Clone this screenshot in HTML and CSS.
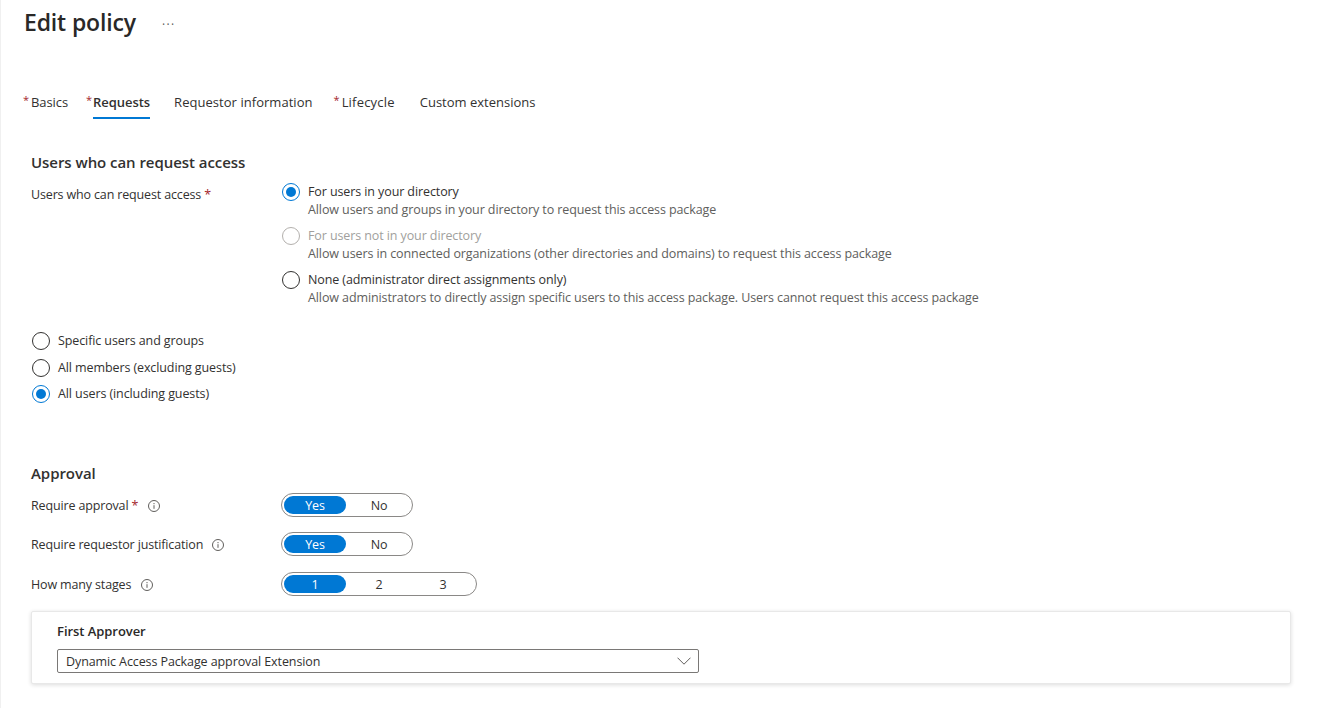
FILE: index.html
```html
<!DOCTYPE html>
<html lang="en">
<head>
<meta charset="utf-8">
<title>Edit policy</title>
<link rel="stylesheet" href="styles.css">
</head>
<body>
<div class="page">
  <header class="title-row">
    <h1 class="title">Edit policy</h1>
    <span class="more">&middot;&middot;&middot;</span>
  </header>
  <nav class="tabs">
    <a class="tab t-basics"><span class="star">*</span>Basics</a>
    <a class="tab t-requests active"><span class="star">*</span><span class="tab-label">Requests</span></a>
    <a class="tab t-info">Requestor information</a>
    <a class="tab t-life"><span class="star">*</span>Lifecycle</a>
    <a class="tab t-custom">Custom extensions</a>
  </nav>
  <main class="content">
    <h2 class="section">Users who can request access</h2>
    <div class="field who">
      <div class="label label-who">Users who can request access <span class="req">*</span></div>
      <div class="options">
        <div class="option">
          <span class="radio checked"></span>
          <div><div class="opt-title">For users in your directory</div><div class="opt-desc">Allow users and groups in your directory to request this access package</div></div>
        </div>
        <div class="option">
          <span class="radio disabled"></span>
          <div><div class="opt-title muted">For users not in your directory</div><div class="opt-desc">Allow users in connected organizations (other directories and domains) to request this access package</div></div>
        </div>
        <div class="option">
          <span class="radio"></span>
          <div><div class="opt-title">None (administrator direct assignments only)</div><div class="opt-desc">Allow administrators to directly assign specific users to this access package. Users cannot request this access package</div></div>
        </div>
      </div>
    </div>
    <div class="scope">
      <div class="scope-item s1"><span class="radio"></span><span>Specific users and groups</span></div>
      <div class="scope-item s2"><span class="radio"></span><span>All members (excluding guests)</span></div>
      <div class="scope-item s3"><span class="radio checked"></span><span>All users (including guests)</span></div>
    </div>
    <h2 class="section approval">Approval</h2>
    <div class="field row r1">
      <div class="label">Require approval <span class="req">*</span><svg class="info i1" viewBox="0 0 12 12"><circle cx="6" cy="6" r="5.5"/><path d="M6 5.2v3.6M6 3v1.2"/></svg></div>
      <div class="toggle"><span class="seg on">Yes</span><span class="seg">No</span></div>
    </div>
    <div class="field row r2">
      <div class="label">Require requestor justification<svg class="info i2" viewBox="0 0 12 12"><circle cx="6" cy="6" r="5.5"/><path d="M6 5.2v3.6M6 3v1.2"/></svg></div>
      <div class="toggle"><span class="seg on">Yes</span><span class="seg">No</span></div>
    </div>
    <div class="field row r3">
      <div class="label">How many stages<svg class="info i3" viewBox="0 0 12 12"><circle cx="6" cy="6" r="5.5"/><path d="M6 5.2v3.6M6 3v1.2"/></svg></div>
      <div class="toggle"><span class="seg on">1</span><span class="seg">2</span><span class="seg">3</span></div>
    </div>
    <section class="card">
      <div class="card-title">First Approver</div>
      <div class="select"><span>Dynamic Access Package approval Extension</span><svg class="chev" viewBox="0 0 14 8"><path d="M.5.7 7 7.2 13.5.7"/></svg></div>
    </section>
  </main>
</div>
</body>
</html>
```
FILE: styles.css
```css
* { box-sizing: border-box; }
html, body { margin: 0; padding: 0; background: #fff; height: 100%; overflow: hidden; }
body {
  font-family: "Open Sans", "Noto Sans", "Liberation Sans", sans-serif;
  font-size: 12.5px;
  letter-spacing: -0.1px;
  color: #323130;
}
.page { height: 708px; padding-left: 2px; border-left: 1px solid #f0f0f0; }
.title-row { display: flex; align-items: center; padding: 6px 0 0 21px; height: 38px; }
.title { margin: 0; font-size: 23px; font-weight: 600; letter-spacing: -0.15px; color: #292827; line-height: 34px; }
.more { margin-left: 26px; padding-top: 5px; font-size: 12px; color: #605e5c; letter-spacing: 1.4px; line-height: 14px; }
.tabs { display: flex; margin-top: 50px; padding-left: 20px; height: 31px; font-size: 13px; letter-spacing: 0; }
.tab { display: block; position: relative; line-height: 20px; padding-top: 4px; color: #323130; white-space: nowrap; }
.star { position: relative; top: -3px; color: #a4262c; font-size: 11px; margin-right: 2px; letter-spacing: 0; }
.t-basics { letter-spacing: -0.1px; }
.t-requests { margin-left: 18px; font-weight: 600; letter-spacing: -0.05px; }
.t-requests .star { margin-right: 1px; font-weight: 400; }
.tab-label { display: inline-block; height: 27px; border-bottom: 2px solid #0078d4; }
.t-info { margin-left: 24px; letter-spacing: 0.04px; }
.t-life { margin-left: 21px; letter-spacing: 0.2px; }
.t-custom { margin-left: 25px; letter-spacing: 0; }
.content { padding-left: 28px; }
.section { margin: 0; font-size: 15px; font-weight: 600; letter-spacing: -0.05px; color: #323130; line-height: 20px; }
.content > .section:first-child { margin-top: 33px; }
.field { display: flex; }
.label { width: 250px; flex: none; line-height: 18px; letter-spacing: -0.15px; }
.label-who { padding-top: 14px; }
.req { color: #a4262c; }
.options { padding: 11px 0 0 1px; }
.option { display: flex; height: 44px; }
.opt-title { line-height: 18px; }
.opt-desc { line-height: 18px; color: #605e5c; }
.muted { color: #a19f9d; }
.radio { flex: none; display: block; width: 18px; height: 18px; border: 1px solid #323130; border-radius: 50%; margin-right: 8px; position: relative; }
.radio.disabled { border-color: #b3b0ad; }
.radio.checked { border-color: #0078d4; }
.radio.checked::after { content: ""; position: absolute; left: 3px; top: 3px; width: 10px; height: 10px; border-radius: 50%; background: #0078d4; }
.scope { margin: 17px 0 0 1px; }
.scope-item { display: flex; align-items: center; height: 18px; line-height: 18px; }
.s2 { margin-top: 9px; }
.s3 { margin-top: 8px; }
.approval { margin-top: 60px; }
.row { align-items: center; height: 24px; }
.r1 { margin-top: 11px; }
.r2 { margin-top: 15px; }
.r3 { margin-top: 16px; }
.toggle { display: flex; height: 24px; margin-bottom: 2px; padding: 2px 1px; border: 1px solid #8a8886; border-radius: 12px; }
.seg { width: 62px; height: 18px; margin: 0 1px; line-height: 20px; text-align: center; color: #323130; border-radius: 9px; }
.seg.on { background: #0078d4; color: #fff; }
.info { width: 12px; height: 12px; fill: none; stroke: #605e5c; stroke-width: 1; vertical-align: -2px; }
.i1 { margin-left: 10px; }
.i2 { margin-left: 9px; }
.i3 { margin-left: 10px; }
.card { width: 1260px; height: 73px; margin-top: 14px; padding: 10px 25px; border: 1px solid #e8e8e8; border-radius: 2px; box-shadow: 0 1px 4px rgba(0,0,0,.14); background: #fff; }
.card-title { font-size: 13px; letter-spacing: -0.05px; font-weight: 600; line-height: 18px; color: #292827; }
.select { display: flex; align-items: center; justify-content: space-between; width: 642px; height: 24px; margin-top: 9px; padding: 0 7px 0 8px; border: 1px solid #7a7876; border-radius: 2px; }
.chev { width: 14px; height: 8px; fill: none; stroke: #605e5c; stroke-width: 1; }
```
